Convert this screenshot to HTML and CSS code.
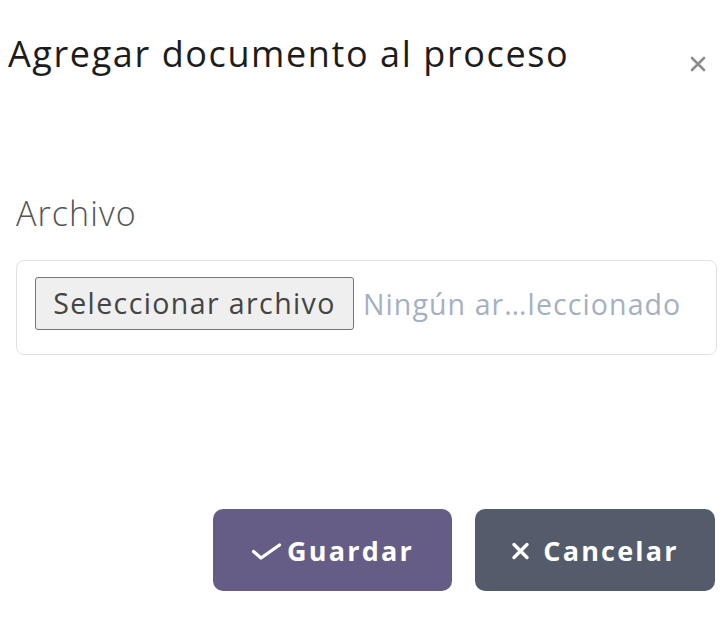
FILE: index.html
```html
<!DOCTYPE html>
<html lang="es">
<head>
  <meta charset="utf-8">
  <meta name="viewport" content="width=device-width, initial-scale=1.0">
  <title>Agregar documento al proceso</title>
  <link rel="stylesheet" href="styles.css">
</head>
<body>
  <div class="modal">
    <div class="modal-header">
      <h5 class="modal-title">Agregar documento al proceso</h5>
      <button type="button" class="close" aria-label="Cerrar">
        <svg width="18" height="18" viewBox="0 0 18 18"><path d="M3 3 L15 15 M15 3 L3 15" stroke="#8c8c8c" stroke-width="2.6" stroke-linecap="round"/></svg>
      </button>
    </div>

    <div class="modal-body">
      <label class="field-label" for="archivo">Archivo</label>
      <div class="file-box" id="archivo">
        <span class="file-btn">Seleccionar archivo</span>
        <span class="file-name">Ningún ar…leccionado</span>
      </div>
    </div>

    <div class="modal-footer">
      <button type="button" class="btn btn-save">
        <svg class="ico" width="31" height="18" viewBox="0 0 31 18"><path d="M2.5 9.5 L10 16 L28.5 3" fill="none" stroke="#fff" stroke-width="3.2" stroke-linecap="round" stroke-linejoin="round"/></svg>
        Guardar
      </button>
      <button type="button" class="btn btn-cancel">
        <svg class="ico ico-x" width="19" height="18" viewBox="0 0 19 18"><path d="M3 2.5 L16 15.5 M16 2.5 L3 15.5" stroke="#fff" stroke-width="3.4" stroke-linecap="round"/></svg>
        Cancelar
      </button>
    </div>
  </div>
</body>
</html>
```

FILE: styles.css
```css
* {
    box-sizing: border-box;
}

body {
    margin: 0;
    font-family: "Open Sans", "Liberation Sans", sans-serif;
    background: #fff;
    color: #212529;
}

.modal {
    width: 723px;
}

/* ---------- cabecera ---------- */
.modal-header {
    display: flex;
    justify-content: space-between;
    align-items: flex-start;
    padding: 33px 16px 0 8px;
}

.modal-title {
    margin: 0;
    font-size: 36px;
    font-weight: 400;
    line-height: 42px;
    letter-spacing: 1.6px;
    color: #1c1c1c;
}

.close {
    margin-top: 22px;
    padding: 0;
    border: 0;
    background: none;
    width: 18px;
    height: 18px;
}

.close svg {
    display: block;
}

/* ---------- cuerpo ---------- */
.modal-body {
    padding: 118px 6px 0 16px;
}

.field-label {
    display: block;
    font-size: 34px;
    font-weight: 300;
    line-height: 40px;
    letter-spacing: 1.1px;
    color: #555;
    margin-bottom: 27px;
}

.file-box {
    display: flex;
    align-items: center;
    border: 1px solid #dee2e6;
    border-radius: 8px;
    padding: 16px 17px 24px 18px;
}

.file-btn {
    width: 319px;
    height: 53px;
    line-height: 51px;
    text-align: center;
    background: #efefef;
    border: 1px solid #767676;
    border-radius: 3px;
    font-size: 28.5px;
    letter-spacing: 1.4px;
    color: #444;
}

.file-name {
    margin-left: 9px;
    font-size: 28.5px;
    letter-spacing: 1.1px;
    color: #a5b0c3;
    white-space: nowrap;
}

/* ---------- pie ---------- */
.modal-footer {
    display: flex;
    justify-content: flex-end;
    gap: 23px;
    padding: 154px 8px 0 0;
}

.btn {
    display: flex;
    align-items: center;
    justify-content: center;
    gap: 5px;
    height: 82px;
    border: 0;
    border-radius: 10px;
    font-family: "Open Sans", "Liberation Sans", sans-serif;
    font-size: 27px;
    font-weight: 700;
    letter-spacing: 2.2px;
    color: #fff;
}

.ico {
    margin-top: 2px;
}

.ico-x {
    margin-right: 8px;
}

.btn-save {
    width: 239px;
    background: #655d85;
}

.btn-cancel {
    width: 240px;
    background: #545b6a;
}
```
